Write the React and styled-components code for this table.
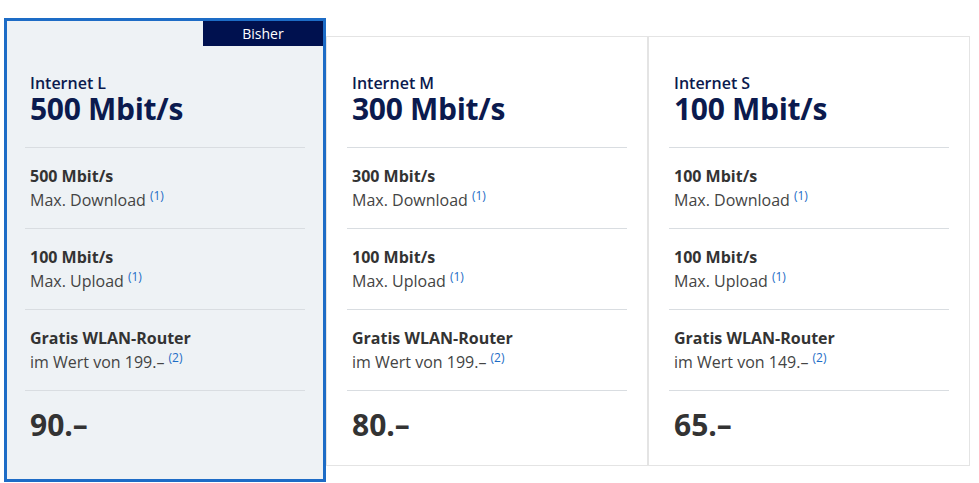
import React from 'react'
import styled, { createGlobalStyle } from 'styled-components'

const GlobalStyle = createGlobalStyle`
  body {
    margin: 0;
    background: #fff;
    font-family: "Open Sans", "Noto Sans", sans-serif;
  }
`

const Row = styled.div`
  display: flex;
  align-items: flex-start;
  padding: 18px 0 0 4px;
`

const Card = styled.div`
  position: relative;
  box-sizing: border-box;
  width: 322px;
  background: ${p => (p.$current ? '#eef2f5' : '#fff')};
  border: ${p => (p.$current ? '3px solid #1d6cc6' : '1px solid #e4e4e4')};
  margin-top: ${p => (p.$current ? '0' : '18px')};
  padding: ${p => (p.$current ? '16px 18px 14px' : '0 20px')};
`

const Badge = styled.div`
  position: absolute;
  top: 0;
  right: 0;
  width: 120px;
  height: 25px;
  background: #00114f;
  color: #fff;
  font-size: 14px;
  line-height: 25px;
  text-align: center;
`

const Head = styled.div`
  padding: 36px 5px 22px;
`

const Name = styled.div`
  color: #0b1a4e;
  font-size: 16px;
  font-weight: 600;
  line-height: 20px;
`

const Speed = styled.div`
  color: #0b1a4e;
  font-size: 30px;
  font-weight: 700;
  line-height: 32px;
  letter-spacing: -0.3px;
`

const Feature = styled.div`
  border-top: 1px solid #d9dde1;
  padding: 16px 5px;
  font-size: 16px;
  line-height: 24px;
`

const Label = styled.div`
  color: #333;
  font-weight: 700;
`

const Sub = styled.div`
  color: #444;
`

const Note = styled.span`
  color: #1d6cc6;
  font-size: 12px;
  line-height: 0;
  vertical-align: 6px;
`

const Price = styled.div`
  border-top: 1px solid #d9dde1;
  padding: 18px 5px 24px;
  color: #333;
  font-size: 30px;
  font-weight: 700;
  line-height: 32px;
`

const plans = [
  { name: 'Internet L', down: '500', up: '100', router: '199', price: '90', current: true },
  { name: 'Internet M', down: '300', up: '100', router: '199', price: '80' },
  { name: 'Internet S', down: '100', up: '100', router: '149', price: '65' },
]

function Plan({ plan }) {
  return (
    <Card $current={plan.current}>
      {plan.current && <Badge>Bisher</Badge>}
      <Head>
        <Name>{plan.name}</Name>
        <Speed>{plan.down} Mbit/s</Speed>
      </Head>
      <Feature>
        <Label>{plan.down} Mbit/s</Label>
        <Sub>Max. Download <Note>(1)</Note></Sub>
      </Feature>
      <Feature>
        <Label>{plan.up} Mbit/s</Label>
        <Sub>Max. Upload <Note>(1)</Note></Sub>
      </Feature>
      <Feature>
        <Label>Gratis WLAN-Router</Label>
        <Sub>im Wert von {plan.router}.– <Note>(2)</Note></Sub>
      </Feature>
      <Price>{plan.price}.–</Price>
    </Card>
  )
}

export default function App() {
  return (
    <>
      <GlobalStyle />
      <Row>
        {plans.map(p => (
          <Plan key={p.name} plan={p} />
        ))}
      </Row>
    </>
  )
}
